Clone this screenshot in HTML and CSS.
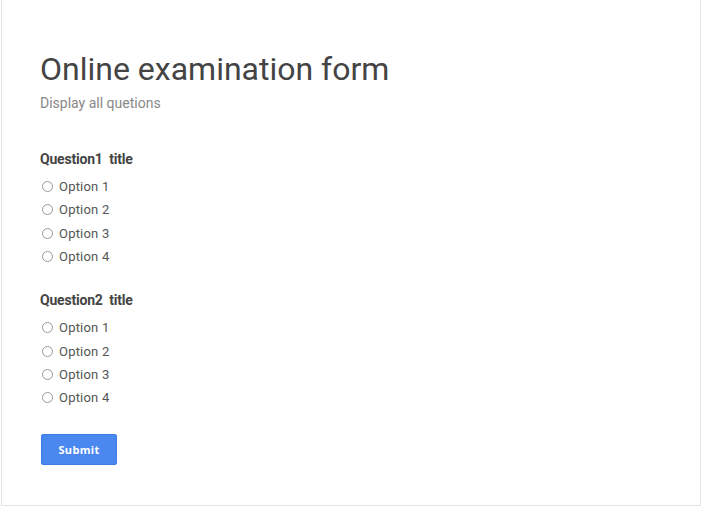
FILE: index.html
```html
<!DOCTYPE html>
<html>
<head>
<meta charset="utf-8">
<link rel="stylesheet" href="styles.css">
</head>
<body>
<div class="card">
  <h1 class="title">Online examination form</h1>
  <p class="subtitle">Display all quetions</p>

  <div class="question">
    <div class="q-title">Question1 &nbsp;title</div>
    <label class="option"><span class="radio"></span>Option 1</label>
    <label class="option"><span class="radio"></span>Option 2</label>
    <label class="option"><span class="radio"></span>Option 3</label>
    <label class="option"><span class="radio"></span>Option 4</label>
  </div>

  <div class="question">
    <div class="q-title">Question2 &nbsp;title</div>
    <label class="option"><span class="radio"></span>Option 1</label>
    <label class="option"><span class="radio"></span>Option 2</label>
    <label class="option"><span class="radio"></span>Option 3</label>
    <label class="option"><span class="radio"></span>Option 4</label>
  </div>

  <button class="submit">Submit</button>
</div>
</body>
</html>
```
FILE: styles.css
```css
html, body {
  margin: 0;
  padding: 0;
  background: #ffffff;
}
body {
  font-family: Roboto, "Liberation Sans", sans-serif;
  color: #444;
}
.card {
  margin-left: 1px;
  width: 700px;
  box-sizing: border-box;
  height: 506px;
  border: 1px solid #e3e3e3;
  border-top: none;
  padding: 49px 0 0 38px;
  display: flex;
  flex-direction: column;
  align-items: flex-start;
}
.title {
  margin: 0;
  font-size: 32px;
  font-weight: 400;
  line-height: 40px;
  color: #444;
}
.subtitle {
  margin: 4px 0 0;
  font-size: 14px;
  line-height: 20px;
  color: #888;
}
.question {
  display: flex;
  flex-direction: column;
  margin-top: 36px;
}
.question + .question {
  margin-top: 22px;
}
.q-title {
  font-size: 14px;
  font-weight: 700;
  line-height: 20px;
  color: #444;
  margin-bottom: 6px;
  letter-spacing: -0.2px;
}
.option {
  display: flex;
  align-items: center;
  height: 23.3px;
  font-size: 13px;
  color: #555;
  letter-spacing: 0.2px;
}
.radio {
  width: 9px;
  height: 9px;
  border: 1px solid #999;
  border-radius: 50%;
  margin: 0 6px 0 2px;
  box-sizing: content-box;
}
.submit {
  margin-top: 25px;
  margin-left: 1px;
  width: 76px;
  height: 31px;
  background: #4a87ee;
  border: 1px solid #3f7de6;
  border-radius: 2px;
  color: #fff;
  font-family: "Open Sans", "DejaVu Sans", sans-serif;
  font-weight: 700;
  font-size: 11px;
  letter-spacing: 0.3px;
  padding: 0;
}
```
